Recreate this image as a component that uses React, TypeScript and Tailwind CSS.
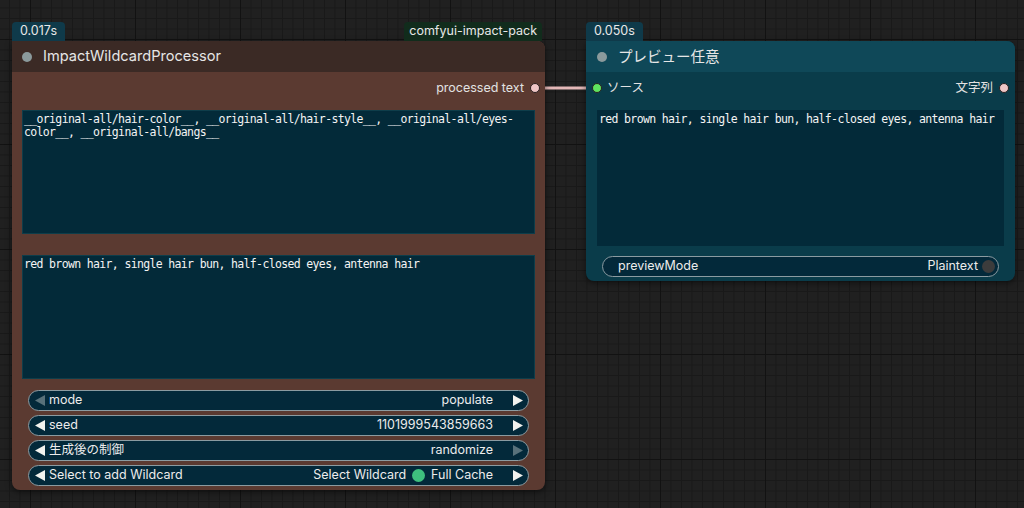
import React from "react";

const UI_FONT = "font-['Inter','Noto_Sans_CJK_JP',sans-serif]";
const MONO_FONT =
  "font-['DejaVu_Sans_Mono','Noto_Sans_CJK_JP',monospace] text-[11.5px] leading-[13px] tracking-[-0.65px]";

function Badge({ children, className }: { children: React.ReactNode; className: string }) {
  return (
    <div
      className={`flex h-[19px] items-center rounded-t-[4px] text-[12.5px] text-[#e8e8e8] ${className}`}
    >
      {children}
    </div>
  );
}

function Arrow({ dir, dim }: { dir: "left" | "right"; dim?: boolean }) {
  return (
    <svg width="10" height="11" viewBox="0 0 10 11" className="shrink-0">
      <polygon
        points={dir === "left" ? "10,0 10,11 0,5.5" : "0,0 0,11 10,5.5"}
        fill={dim ? "#58717a" : "#f2f2ee"}
      />
    </svg>
  );
}

function Dot({ color }: { color: string }) {
  return (
    <span
      className="inline-block h-[10px] w-[10px] shrink-0 rounded-full border border-[#2a2020]"
      style={{ background: color }}
    />
  );
}

function ComboWidget({
  label,
  value,
  leftDim,
  rightDim,
}: {
  label: string;
  value: React.ReactNode;
  leftDim?: boolean;
  rightDim?: boolean;
}) {
  return (
    <div className="flex h-[21px] items-center rounded-full border border-[#8b9ba1] bg-[#03293a] pl-[6px] pr-[5px] text-[12.5px] text-[#ececec]">
      <Arrow dir="left" dim={leftDim} />
      <span className="ml-[4px] whitespace-nowrap">{label}</span>
      <span className="ml-auto flex items-center whitespace-nowrap">{value}</span>
      <span className="ml-[20px]">
        <Arrow dir="right" dim={rightDim} />
      </span>
    </div>
  );
}

function WildcardProcessor() {
  return (
    <div className="absolute left-[12px] top-[22px] w-[533px]">
      <div className="flex h-[19px] items-end justify-between">
        <Badge className="bg-[#0f3a4a] px-[8px]">0.017s</Badge>
        <Badge className="mr-[3px] bg-[#112c1c] px-[5px]">comfyui-impact-pack</Badge>
      </div>
      <div className="h-[449px] overflow-hidden rounded-[8px] rounded-tl-none bg-[#5b3a31] shadow-[0_2px_6px_rgba(0,0,0,0.5)]">
        <div className="flex h-[31px] items-center gap-[11px] bg-[#3b2a25] pl-[10px]">
          <span className="h-[10px] w-[10px] rounded-full bg-[#8b9a9c]" />
          <span className="text-[14.6px] text-[#e6e6e6]">ImpactWildcardProcessor</span>
        </div>
        <div className="mt-[6px] flex h-[20px] items-center justify-end gap-[6px] pr-[5px] text-[12.5px] text-[#e2e2e2]">
          <span>processed text</span>
          <Dot color="#efc6c6" />
        </div>
        <div className="mx-[10px] mt-[12px] h-[124px] border border-[#0e3d4a] bg-[#032a39] px-[1px] pt-[2px] text-[#f4f4f4]">
          <div className={`${MONO_FONT} break-words`}>
            __original-all/hair-color__, __original-all/hair-style__, __original-all/eyes-color__,
            __original-all/bangs__
          </div>
        </div>
        <div className="mx-[10px] mt-[21px] h-[124px] border border-[#0e3d4a] bg-[#032a39] px-[1px] pt-[2px] text-[#f4f4f4]">
          <div className={MONO_FONT}>red brown hair, single hair bun, half-closed eyes, antenna hair</div>
        </div>
        <div className="mx-[16px] mt-[11px] flex flex-col gap-[4px]">
          <ComboWidget label="mode" value="populate" leftDim />
          <ComboWidget label="seed" value="1101999543859663" />
          <ComboWidget label="生成後の制御" value="randomize" rightDim />
          <ComboWidget
            label="Select to add Wildcard"
            value={
              <>
                Select Wildcard
                <span className="mx-[6px] h-[13px] w-[13px] rounded-full bg-[#3ec07e]" />
                Full Cache
              </>
            }
          />
        </div>
      </div>
    </div>
  );
}

function PreviewAny() {
  return (
    <div className="absolute left-[586px] top-[22px] w-[429px]">
      <div className="flex h-[19px] items-end">
        <Badge className="bg-[#0f3a4a] px-[8px]">0.050s</Badge>
      </div>
      <div className="h-[240px] overflow-hidden rounded-[8px] rounded-tl-none bg-[#0a3c4a] shadow-[0_2px_6px_rgba(0,0,0,0.5)]">
        <div className="flex h-[31px] items-center gap-[11px] bg-[#0f4858] pl-[11px]">
          <span className="h-[10px] w-[10px] rounded-full bg-[#8b9a9c]" />
          <span className="text-[14.5px] text-[#e6e6e6]">プレビュー任意</span>
        </div>
        <div className="mt-[6px] flex h-[20px] items-center pl-[6px] pr-[6px] text-[12.5px] text-[#e2e2e2]">
          <Dot color="#5fe35f" />
          <span className="ml-[5px]">ソース</span>
          <span className="ml-auto mr-[6px]">文字列</span>
          <Dot color="#efc6c6" />
        </div>
        <div className="mx-[11px] mt-[12px] h-[136px] bg-[#032a39] px-[2px] pt-[3px] text-[#f4f4f4]">
          <div className={MONO_FONT}>red brown hair, single hair bun, half-closed eyes, antenna hair</div>
        </div>
        <div className="mx-[16px] mt-[10px] flex h-[21px] items-center rounded-full border border-[#8b9ba1] bg-[#03293a] pl-[15px] pr-[3px] text-[12.5px] text-[#ececec]">
          <span>previewMode</span>
          <span className="ml-auto">Plaintext</span>
          <span className="ml-[4px] h-[13px] w-[13px] rounded-full bg-[#3c3c3c]" />
        </div>
      </div>
    </div>
  );
}

export default function App() {
  return (
    <div
      className={`relative h-[508px] w-[1024px] overflow-hidden bg-[#202020] bg-[linear-gradient(to_right,#121212_1px,transparent_1px),linear-gradient(to_bottom,#121212_1px,transparent_1px),linear-gradient(to_right,#191919_1px,transparent_1px),linear-gradient(to_bottom,#191919_1px,transparent_1px)] bg-size-[105px_105px,105px_105px,10.5px_10.5px,10.5px_10.5px] bg-position-[30px_39px,30px_39px,9px_7.5px,9px_7.5px] ${UI_FONT}`}
    >
      {/* link between nodes */}
      <svg className="absolute left-0 top-0" width="1024" height="508">
        <line x1="536" y1="88" x2="597" y2="88" stroke="#e4b8b8" strokeWidth="3" />
      </svg>
      <WildcardProcessor />
      <PreviewAny />
    </div>
  );
}
